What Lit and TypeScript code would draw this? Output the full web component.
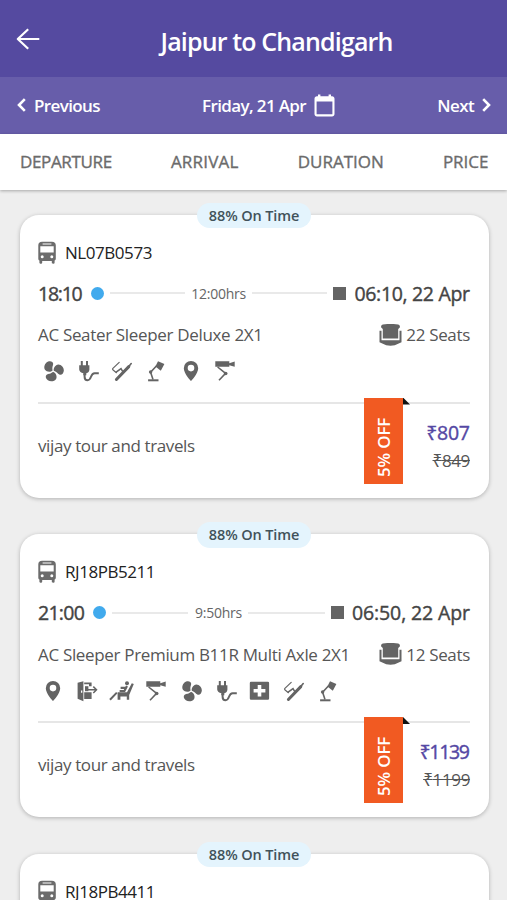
import { LitElement, html, svg, css } from "lit";
import { customElement, property } from "lit/decorators.js";
import { styleMap } from "lit/directives/style-map.js";

type Amenity = "fan" | "plug" | "pillow" | "lamp" | "pin" | "cctv" | "exit" | "legrest" | "medical";

interface Trip {
  plate: string;
  depart: string;
  duration: string;
  arrive: string;
  coach: string;
  seats: number;
  amenities: Amenity[];
  operator: string;
  price: number;
  oldPrice: number;
}

const TRIPS: Trip[] = [
  {
    plate: "NL07B0573", depart: "18:10", duration: "12:00hrs", arrive: "06:10, 22 Apr",
    coach: "AC Seater Sleeper Deluxe 2X1", seats: 22,
    amenities: ["fan", "plug", "pillow", "lamp", "pin", "cctv"],
    operator: "vijay tour and travels", price: 807, oldPrice: 849,
  },
  {
    plate: "RJ18PB5211", depart: "21:00", duration: "9:50hrs", arrive: "06:50, 22 Apr",
    coach: "AC Sleeper Premium B11R Multi Axle 2X1", seats: 12,
    amenities: ["pin", "exit", "legrest", "cctv", "fan", "plug", "medical", "pillow", "lamp"],
    operator: "vijay tour and travels", price: 1139, oldPrice: 1199,
  },
  {
    plate: "RJ18PB4411", depart: "21:00", duration: "9:50hrs", arrive: "06:50, 22 Apr",
    coach: "AC Sleeper Premium B11R Multi Axle 2X1", seats: 12,
    amenities: ["pin", "exit", "legrest", "cctv"],
    operator: "vijay tour and travels", price: 1139, oldPrice: 1199,
  },
];

/** Tightens figures that hold the narrow digit 1; the margin gives back the trailing gap. */
const figureSpacing = (text: string, base: number) => {
  const ones = text.split("1").length - 1;
  const gap = base - (ones * 2.6) / text.length;
  return styleMap({ letterSpacing: `${gap.toFixed(2)}px`, marginRight: `${(-gap).toFixed(2)}px` });
};

const BLADE = "M11 11.200C9 13.200 4.400 13 2.600 10.400C.8 7.400 2.600 3 5.600 1.600C8.600 .3 11.600 1.400 11.600 3.900C11.600 6.200 10.200 7.400 11 11.200Z";

const GLYPHS = {
  fan: svg`
    <g transform="translate(.6 .3) scale(.91)">
      <path d=${BLADE} />
      <path d=${BLADE} transform="rotate(120 11.6 11.7)" />
      <path d=${BLADE} transform="rotate(240 11.6 11.7)" />
    </g>`,
  plug: svg`
    <g transform="translate(1.4 0)">
      <path d="M3.400 1h2v4.200h3.200V1h2v4.200h1.400v4.400c0 2-1.200 3.200-3.100 3.700v1.900H5.900v-1.900C3.800 12.800 1.800 11.600 1.800 9.600V5.200h1.600z" />
      <path class="line" stroke-width="2" d="M7.200 14v2.700c0 2.200 1.100 3.500 3 3.500c4.400 0 2.400-7 7-7h4.200" />
    </g>`,
  pillow: svg`
    <path class="line" stroke-width="3" stroke-linecap="round" d="M5.400 19.500L17.800 6.600" />
    <path class="line" stroke-width="1.600" stroke-linecap="round" d="M17 7.500L20.200 3.600" />
    <path class="line" stroke-width="1.200" stroke-linecap="round" d="M8.200 2.400L1.900 8.300c-.6.700-.4 1.200.2 1.700l3.300 2.700" />
    <path class="line" stroke-width="1.500" d="M4.800 12.300L10 8.600l1.800 3" />`,
  lamp: svg`
    <g transform="translate(1.600 0)">
      <path d="M1.500 19.300h10.400v2H1.500z" />
      <path class="line" stroke-width="1.600" d="M6.400 19.500L4 12.200L9.800 6" />
      <circle cx="4" cy="12" r="1.700" />
      <path d="M11.400 1.200L17.800 4L14.200 10.800L8.800 6.400z" />
    </g>`,
  pin: svg`
    <path fill-rule="evenodd" d="M11 1a7.200 7.200 0 0 0-7.200 7.200c0 5.300 7.200 12.800 7.200 12.800s7.200-7.500 7.200-12.800A7.200 7.200 0 0 0 11 1zm0 3.800a3.300 3.300 0 1 1 0 6.600a3.300 3.300 0 0 1 0-6.600z" />`,
  cctv: svg`
    <path d="M1.300 1.200h14v5.600h-14zM15.300 3.200l5.400-1.800v5.400l-5.400-1.600z" />
    <path class="line" stroke-width="1.600" d="M3.600 7l8 6.400l-6.600 6.800" />
    <circle cx="11.700" cy="13.500" r="1.800" />`,
  exit: svg`
    <path fill-rule="evenodd" d="M1.600 2.800L7.400 1.200v20L1.600 18.800zM5 10.400v2.400h1.300v-2.400z" />
    <path d="M8.200 2.400h7.400v3.800H13V4.300H8.200zM8.200 12.300h7.400v6.800H8.200z" />
    <path d="M9 6.200h3.400v5H9z" />
    <path class="line" stroke-width="1.500" d="M11.500 9.800h8.800M17.300 6.600L20.500 9.800l-3.200 3.200" />`,
  legrest: svg`
    <circle cx="16" cy="3.200" r="2" />
    <path class="line" stroke-width="2.200" stroke-linejoin="round" d="M16 6l-2.600 5H8.600M14.600 7.800H9.600" />
    <path d="M6.600 12.200h9.400L20.800 3.200l2 .9L18.200 15v4.800h-2.400v-3.400H9.400v3.400H6.600z" />
    <path class="line" stroke-width="2" d="M-1 19.700L5.800 12.600" />`,
  medical: svg`
    <path fill-rule="evenodd" d="M3 1.800h16.900a1.200 1.200 0 0 1 1.200 1.200v15.500a1.200 1.200 0 0 1-1.200 1.200H3a1.200 1.200 0 0 1-1.200-1.200V3A1.200 1.200 0 0 1 3 1.800zM9.700 5v4H5.600v3.600h4.100v4h3.600v-4h4.100V9h-4.100V5z" />`,
};

@customElement("amenity-icon")
export class AmenityIcon extends LitElement {
  @property() name: Amenity = "fan";

  static styles = css`
    :host { display: block; width: 22px; height: 22px; }
    svg { display: block; overflow: visible; fill: #646464; }
    .line { fill: none; stroke: #646464; }
  `;

  render() {
    return html`<svg width="22" height="22" viewBox="0 0 22 22">${GLYPHS[this.name]}</svg>`;
  }
}

@customElement("trip-card")
export class TripCard extends LitElement {
  @property({ attribute: false }) trip!: Trip;

  static styles = css`
    :host { display: block; }
    .card {
      position: relative;
      box-sizing: border-box;
      height: 283px;
      padding: 23px 18.5px 0;
      border-radius: 19px;
      background: #fff;
      box-shadow: 0 1px 4px rgba(0, 0, 0, 0.26);
      color: #565656;
      display: flex;
      flex-direction: column;
      white-space: nowrap;
    }
    svg { display: block; flex: none; }
    .badge {
      position: absolute;
      left: 177.5px;
      top: -12px;
      width: 114px;
      height: 25.5px;
      border-radius: 13px;
      background: #e4f4fd;
      color: #41525a;
      font-size: 14.5px;
      font-weight: 600;
      line-height: 25.5px;
      letter-spacing: -0.12px;
      text-align: center;
    }
    .row { display: flex; align-items: center; flex: none; }
    .plate { height: 29px; gap: 9px; color: #222; font-size: 17px; letter-spacing: -0.45px; }
    .times { height: 53px; font-size: 19.5px; color: #444; }
    .depart, .arrive { -webkit-text-stroke: 0.4px #444; }
    .dot { width: 13px; height: 13px; border-radius: 50%; background: #41aaed; margin: 0 6px 0 8.5px; }
    .rule { flex: 1; height: 2px; background: #e9e9e9; }
    .duration { font-size: 14px; color: #666; margin: 0 6.5px; letter-spacing: -0.25px; }
    .stop { width: 13px; height: 13px; background: #646464; margin: 0 8.5px 0 6px; }
    .coach { height: 30px; justify-content: space-between; font-size: 17px; letter-spacing: -0.33px; }
    .seats { display: flex; align-items: center; gap: 4px; }
    .amenities { height: 43px; padding-left: 4px; gap: 12.4px; }
    .foot {
      margin-top: 9px;
      height: 85px;
      border-top: 2px solid #e6e6e6;
      justify-content: space-between;
      font-size: 17px;
    }
    .operator { padding-bottom: 2px; letter-spacing: -0.38px; }
    .side { display: flex; height: 85px; align-items: flex-start; }
    .ribbon {
      box-sizing: border-box;
      margin-top: -6px;
      width: 39px;
      height: 86px;
      padding-top: 7px;
      background: #f15a22;
      color: #fff;
      font-weight: 600;
      letter-spacing: -0.2px;
      line-height: 39px;
      writing-mode: vertical-rl;
      transform: rotate(180deg);
    }
    .fold {
      width: 7px;
      height: 7px;
      margin-top: -6px;
      background: #111;
      clip-path: polygon(0 0, 100% 100%, 0 100%);
    }
    .prices { width: 60px; padding-top: 15px; display: flex; flex-direction: column; align-items: flex-end; }
    .now { font-size: 19.5px; line-height: 28px; color: #5548a4; -webkit-text-stroke: 0.4px #5548a4; }
    .was { line-height: 27px; color: #555; letter-spacing: -0.35px; text-decoration: line-through; }
  `;

  render() {
    const t = this.trip;
    const price = `₹${t.price}`;
    return html`
      <article class="card">
        <span class="badge">88% On Time</span>
        <div class="row plate">
          <svg width="18" height="23" viewBox="0 0 18 23">
            <path fill="#6c6c6c" fill-rule="evenodd" d="M4 .8h10c2.400 0 3.800 1.400 3.800 3.600v13.200c0 1-.4 1.600-1.200 2v1.900c0 .8-.4 1.200-1 1.200h-.8c-.7 0-1-.4-1-1.200V20H4.200v1.500c0 .8-.4 1.200-1 1.200h-.8c-.7 0-1-.4-1-1.200v-1.900C.6 19.200.3 18.600.3 17.600V4.400C.3 2.200 1.600.8 4 .8zM2.300 5.200v6.200h13.400V5.200zM4.600 2.500v.9h8.800v-.9zM4.200 14.300a1.500 1.500 0 1 0 0 3a1.500 1.500 0 0 0 0-3zm9.600 0a1.500 1.500 0 1 0 0 3a1.500 1.500 0 0 0 0-3z" />
          </svg>
          <span>${t.plate}</span>
        </div>
        <div class="row times">
          <span class="depart" style=${figureSpacing(t.depart, -0.2)}>${t.depart}</span>
          <i class="dot"></i><i class="rule"></i>
          <span class="duration">${t.duration}</span>
          <i class="rule"></i><i class="stop"></i>
          <span class="arrive" style=${figureSpacing(t.arrive, -0.12)}>${t.arrive}</span>
        </div>
        <div class="row coach">
          <span class="model">${t.coach}</span>
          <span class="seats">
            <svg width="23" height="22" viewBox="0 0 23 22">
              <path fill="#646464" d="M3.8.5Q11.500-.7 19.200.5Q21.400 1 20.800 3.400L19.200 5v9.500H3.800V5L2.200 3.400Q1.600 1 3.800.5z" />
              <path fill="#646464" d="M.5 6.800h2v9.400h18V6.800h2v11.400l-2.800 1.400Q16 21.800 11.500 21.800T3.300 19.600L.5 18.200z" />
            </svg>
            <span>${t.seats} Seats</span>
          </span>
        </div>
        <div class="row amenities">
          ${t.amenities.map((a) => html`<amenity-icon name=${a}></amenity-icon>`)}
        </div>
        <div class="row foot">
          <span class="operator">${t.operator}</span>
          <div class="side">
            <div class="ribbon">5% OFF</div>
            <i class="fold"></i>
            <div class="prices">
              <div class="now" style=${figureSpacing(price, -0.25)}>${price}</div>
              <div class="was">₹${t.oldPrice}</div>
            </div>
          </div>
        </div>
      </article>
    `;
  }
}

@customElement("app-root")
export class AppRoot extends LitElement {
  static styles = css`
    :host {
      display: block;
      height: 900px;
      overflow: hidden;
      background: #eee;
      font-family: "Open Sans", "Noto Sans", sans-serif;
    }
    svg { display: block; flex: none; }
    .title-bar {
      height: 77px;
      box-sizing: border-box;
      padding: 4px 0 0 16px;
      display: flex;
      align-items: center;
      background: #554aa0;
      color: #fff;
    }
    .back { margin-top: -3px; }
    .title { margin: 0 0 0 120.5px; font-size: 25px; font-weight: 600; letter-spacing: -0.85px; white-space: nowrap; }
    .day-bar {
      height: 56.5px;
      box-sizing: border-box;
      padding: 0 16px 0 17px;
      display: flex;
      align-items: center;
      justify-content: space-between;
      background: #675daa;
      color: #fff;
      font-size: 17px;
      font-weight: 600;
      letter-spacing: -0.63px;
    }
    .group { display: flex; align-items: center; gap: 8px; white-space: nowrap; }
    .tabs {
      position: relative;
      height: 56.5px;
      box-sizing: border-box;
      padding: 0 18.5px 0 20px;
      display: flex;
      align-items: center;
      justify-content: space-between;
      background: #fff;
      color: #6b6b6b;
      font-size: 17px;
      -webkit-text-stroke: 0.35px #6b6b6b;
      box-shadow: 0 1px 3px rgba(0, 0, 0, 0.3);
    }
    .departure { letter-spacing: -0.35px; }
    .arrival { letter-spacing: 0.2px; }
    .list { padding: 24.5px 18.5px 0 19.5px; display: flex; flex-direction: column; gap: 36.6px; }
  `;

  render() {
    return html`
      <header class="title-bar">
        <svg class="back" width="24" height="22" viewBox="0 0 24 22" fill="none" stroke="#fff" stroke-width="2.2" stroke-linejoin="round">
          <path d="M23.300 11H1.800M12.200 1.200L1.800 11l10.400 9.800" />
        </svg>
        <h1 class="title">Jaipur to Chandigarh</h1>
      </header>
      <nav class="day-bar">
        <span class="group">
          <svg width="9" height="14" viewBox="0 0 9 14" fill="none" stroke="#fff" stroke-width="2.6"><path d="M7.800 1.200L2 7l5.800 5.800" /></svg>
          Previous
        </span>
        <span class="group">
          Friday, 21 Apr
          <svg width="21" height="23" viewBox="0 0 21 23">
            <path fill="#fff" fill-rule="evenodd" d="M3 2.300h1V.5h2.400v1.800h8.200V.5H17v1.800h1c1.500 0 2.500 1 2.500 2.400v15.300c0 1.500-1 2.400-2.500 2.400H3C1.500 22.400.5 21.500.5 20V4.700C.5 3.300 1.500 2.300 3 2.300zM2.600 7.600v12.600h15.800V7.600z" />
          </svg>
        </span>
        <span class="group">
          Next
          <svg width="9" height="14" viewBox="0 0 9 14" fill="none" stroke="#fff" stroke-width="2.6"><path d="M1.200 1.200L7 7l-5.800 5.800" /></svg>
        </span>
      </nav>
      <nav class="tabs">
        <span class="departure">DEPARTURE</span>
        <span class="arrival">ARRIVAL</span>
        <span>DURATION</span>
        <span>PRICE</span>
      </nav>
      <main class="list">${TRIPS.map((t) => html`<trip-card .trip=${t}></trip-card>`)}</main>
    `;
  }
}
